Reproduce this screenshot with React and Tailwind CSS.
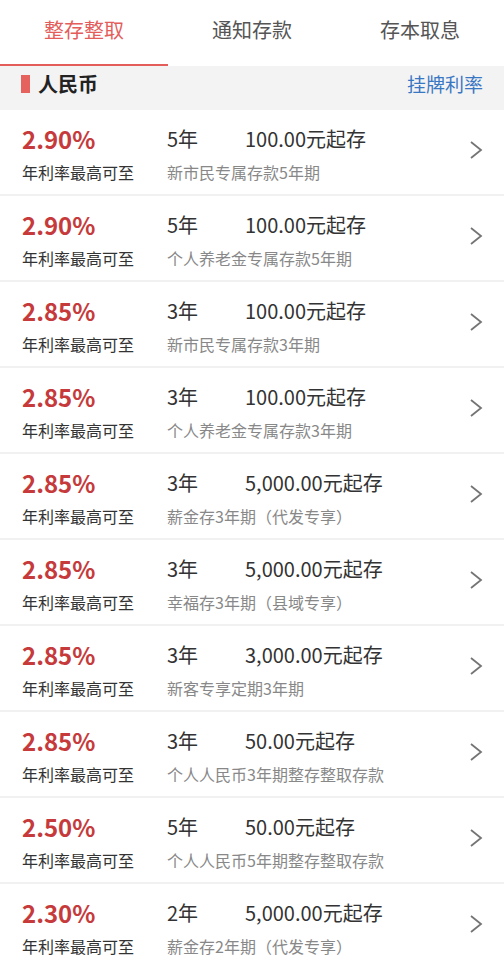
import React from "react";

const rows = [
  { rate: "2.90%", term: "5年", amount: "100.00元起存", name: "新市民专属存款5年期" },
  { rate: "2.90%", term: "5年", amount: "100.00元起存", name: "个人养老金专属存款5年期" },
  { rate: "2.85%", term: "3年", amount: "100.00元起存", name: "新市民专属存款3年期" },
  { rate: "2.85%", term: "3年", amount: "100.00元起存", name: "个人养老金专属存款3年期" },
  { rate: "2.85%", term: "3年", amount: "5,000.00元起存", name: "薪金存3年期（代发专享）" },
  { rate: "2.85%", term: "3年", amount: "5,000.00元起存", name: "幸福存3年期（县域专享）" },
  { rate: "2.85%", term: "3年", amount: "3,000.00元起存", name: "新客专享定期3年期" },
  { rate: "2.85%", term: "3年", amount: "50.00元起存", name: "个人人民币3年期整存整取存款" },
  { rate: "2.50%", term: "5年", amount: "50.00元起存", name: "个人人民币5年期整存整取存款" },
  { rate: "2.30%", term: "2年", amount: "5,000.00元起存", name: "薪金存2年期（代发专享）" },
];

const tabs = ["整存整取", "通知存款", "存本取息"];

function Chevron() {
  return (
    <svg width="14" height="20" viewBox="0 0 14 20" fill="none">
      <polyline points="2,2 12,10 2,18" stroke="#747474" strokeWidth="1.8" strokeLinejoin="miter" />
    </svg>
  );
}

function DepositRow({ item }) {
  return (
    <div className="flex h-[86px] border-b-2 border-[#f1f1f1] bg-white pl-[22px] pr-[21px]">
      <div className="w-[145px] shrink-0 pt-[14px]">
        <div className="text-[24px] font-bold leading-[29px] text-[#c63a3b]">{item.rate}</div>
        <div className="mt-[7px] text-[16px] leading-[24px] text-[#333]">年利率最高可至</div>
      </div>
      <div className="flex-1 pt-[14px]">
        <div className="flex text-[20px] leading-[29px] text-[#333]">
          <span className="w-[78px]">{item.term}</span>
          <span>{item.amount}</span>
        </div>
        <div className="mt-[7px] text-[16px] leading-[24px] text-[#888]">{item.name}</div>
      </div>
      <div className="flex items-center pb-[4px]">
        <Chevron />
      </div>
    </div>
  );
}

export default function App() {
  return (
    <div
      className="w-[504px] h-[960px] overflow-hidden bg-white"
      style={{ fontFamily: '"Noto Sans CJK SC", "Noto Sans", sans-serif' }}
    >
      <div className="flex h-[66px]">
        {tabs.map((t, i) => (
          <div
            key={t}
            className={
              i === 0
                ? "flex-1 border-b-2 border-[#e35d5b] pb-[4px] text-center text-[20px] leading-[60px] text-[#e35d5b]"
                : "flex-1 border-b-2 border-transparent pb-[4px] text-center text-[20px] leading-[60px] text-[#555]"
            }
          >
            {t}
          </div>
        ))}
      </div>

      <div className="flex h-[44px] items-start justify-between bg-[#f3f3f4] pl-[21px] pr-[21px] pt-[5px]">
        <div className="flex items-center">
          <span className="mr-[8px] h-[18px] w-[9px] bg-[#e5625f]" />
          <span className="text-[20px] font-bold leading-[26px] text-[#222]">人民币</span>
        </div>
        <span className="text-[19px] leading-[26px] text-[#3a77c2]">挂牌利率</span>
      </div>

      {rows.map((r, i) => (
        <DepositRow key={i} item={r} />
      ))}
    </div>
  );
}
